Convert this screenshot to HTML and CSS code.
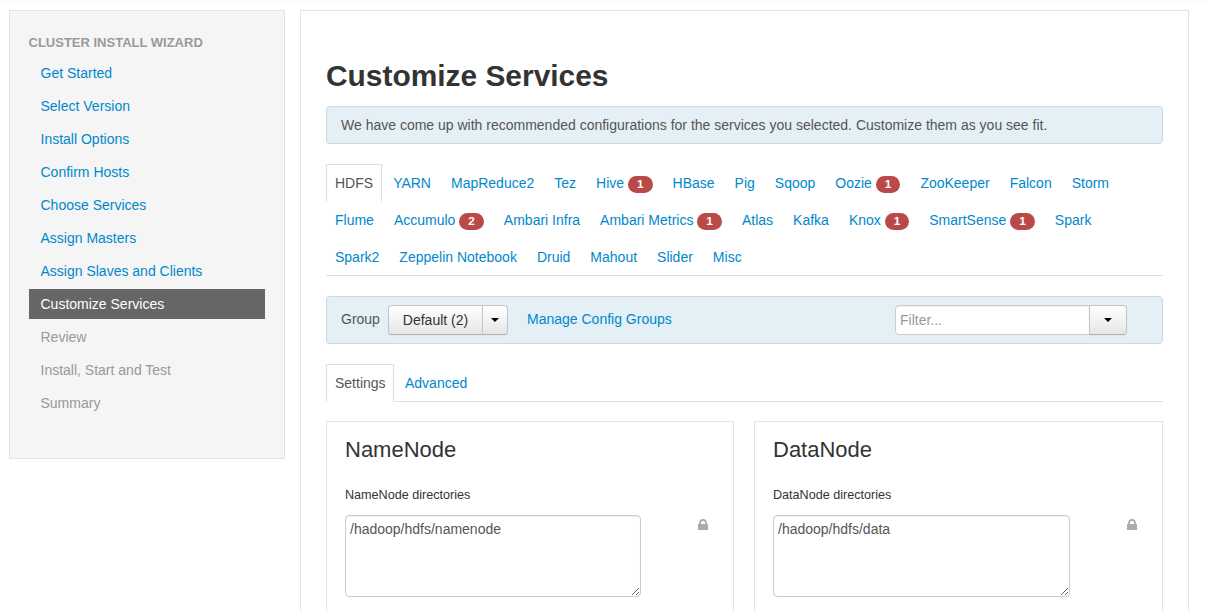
FILE: index.html
```html
<!DOCTYPE html>
<html lang="en">
<head>
<meta charset="utf-8">
<title>Cluster Install Wizard</title>
<link rel="stylesheet" href="styles.css">
</head>
<body>
<div class="page">
  <aside class="sidebar">
    <div class="nav-header">CLUSTER INSTALL WIZARD</div>
    <ul class="steps">
      <li><a>Get Started</a></li>
      <li><a>Select Version</a></li>
      <li><a>Install Options</a></li>
      <li><a>Confirm Hosts</a></li>
      <li><a>Choose Services</a></li>
      <li><a>Assign Masters</a></li>
      <li><a>Assign Slaves and Clients</a></li>
      <li class="active"><a>Customize Services</a></li>
      <li class="disabled"><a>Review</a></li>
      <li class="disabled"><a>Install, Start and Test</a></li>
      <li class="disabled"><a>Summary</a></li>
    </ul>
  </aside>
  <main class="content">
    <h2>Customize Services</h2>
    <div class="alert">We have come up with recommended configurations for the services you selected. Customize them as you see fit.</div>
    <ul class="tabs services">
      <li class="active"><a>HDFS</a></li>
      <li><a>YARN</a></li>
      <li><a>MapReduce2</a></li>
      <li><a>Tez</a></li>
      <li><a>Hive <span class="badge">1</span></a></li>
      <li><a>HBase</a></li>
      <li><a>Pig</a></li>
      <li><a>Sqoop</a></li>
      <li><a>Oozie <span class="badge">1</span></a></li>
      <li><a>ZooKeeper</a></li>
      <li><a>Falcon</a></li>
      <li><a>Storm</a></li>
      <li><a>Flume</a></li>
      <li><a>Accumulo <span class="badge">2</span></a></li>
      <li><a>Ambari Infra</a></li>
      <li><a>Ambari Metrics <span class="badge">1</span></a></li>
      <li><a>Atlas</a></li>
      <li><a>Kafka</a></li>
      <li><a>Knox <span class="badge">1</span></a></li>
      <li><a>SmartSense <span class="badge">1</span></a></li>
      <li><a>Spark</a></li>
      <li><a>Spark2</a></li>
      <li><a>Zeppelin Notebook</a></li>
      <li><a>Druid</a></li>
      <li><a>Mahout</a></li>
      <li><a>Slider</a></li>
      <li><a>Misc</a></li>
    </ul>
    <div class="group-bar">
      <span class="group-label">Group</span>
      <div class="btn-group">
        <button class="btn btn-main">Default (2)</button>
        <button class="btn btn-caret"><span class="caret"></span></button>
      </div>
      <a class="manage">Manage Config Groups</a>
      <div class="filter">
        <input type="text" placeholder="Filter...">
        <button class="btn"><span class="caret"></span></button>
      </div>
    </div>
    <ul class="tabs views">
      <li class="active"><a>Settings</a></li>
      <li><a>Advanced</a></li>
    </ul>
    <div class="cards">
      <section class="card">
        <h4>NameNode</h4>
        <label>NameNode directories</label>
        <div class="field">
          <textarea>/hadoop/hdfs/namenode</textarea>
          <svg class="lock" width="10" height="12" viewBox="0 0 10 12"><path fill="#aaa" fill-rule="evenodd" d="M1.2 5V3.8a3.8 3.8 0 0 1 7.6 0V5h.7q.5 0 .5.5v5q0 .5-.5.5h-9q-.5 0-.5-.5v-5Q0 5 .5 5zM3 5h4V3.8a2 2 0 0 0-4 0z"/></svg>
        </div>
      </section>
      <section class="card">
        <h4>DataNode</h4>
        <label>DataNode directories</label>
        <div class="field">
          <textarea>/hadoop/hdfs/data</textarea>
          <svg class="lock" width="10" height="12" viewBox="0 0 10 12"><path fill="#aaa" fill-rule="evenodd" d="M1.2 5V3.8a3.8 3.8 0 0 1 7.6 0V5h.7q.5 0 .5.5v5q0 .5-.5.5h-9q-.5 0-.5-.5v-5Q0 5 .5 5zM3 5h4V3.8a2 2 0 0 0-4 0z"/></svg>
        </div>
      </section>
    </div>
  </main>
</div>
</body>
</html>
```
FILE: styles.css
```css
* { box-sizing: border-box; }
html, body { height: 100%; }
body {
  margin: 0;
  background: linear-gradient(#fafafa, #fff 3px) #fff;
  color: #333;
  font: 14px/20px "Liberation Sans", Arial, sans-serif;
}
ul { list-style: none; margin: 0; padding: 0; }
a { color: #0088cc; text-decoration: none; }
h2, h4 { margin: 0; }

.page {
  display: flex;
  align-items: flex-start;
  gap: 15px;
  height: 100%;
  padding: 10px 19px 0 9px;
}

.sidebar {
  flex: none;
  width: 276px;
  height: 449px;
  padding: 22px 19px;
  background: #f5f5f5;
  border: 1px solid #e3e3e3;
}
.nav-header {
  color: #999;
  font-size: 13px;
  font-weight: bold;
  text-indent: -0.5px;
  text-shadow: 0 1px 0 rgba(255, 255, 255, .5);
  margin-bottom: 5px;
}
.steps { display: flex; flex-direction: column; gap: 3px; }
.steps a { display: block; padding: 5px 11.5px; height: 30px; }
.steps .active a { background: #666; color: #fff; }
.steps .disabled a { color: #999; }

.content {
  flex: 1;
  display: flex;
  flex-direction: column;
  height: 100%;
  padding: 45px 25px 0;
  border: 1px solid #e3e3e3;
  border-bottom: 0;
}
.content h2 { font-size: 29.9px; line-height: 40px; }
.alert {
  margin: 10px 0 20px;
  height: 38px;
  padding: 8px 14px;
  background: #e4f0f5;
  border: 1px solid #cfd9dd;
  border-radius: 4px;
  color: #555;
}

.tabs { display: flex; flex-wrap: wrap; border-bottom: 1px solid #ddd; }
.tabs li { height: 38px; margin-bottom: -1px; }
.tabs a {
  display: block;
  height: 38px;
  margin-right: 2px;
  padding: 8px;
  border: 1px solid transparent;
  white-space: nowrap;
}
.tabs .active a { color: #555; background: #fff; border-color: #ddd; border-bottom-color: #fff; }
.views .active a { width: 68px; }
.services { margin-bottom: 20px; }
.badge {
  display: inline-block;
  height: 17px;
  margin: 1px 0 -5px;
  padding: 1px 9px 2px;
  border-radius: 9px;
  background: #b94a48;
  color: #fff;
  font-size: 11.844px;
  font-weight: bold;
  line-height: 14px;
}

.group-bar {
  display: flex;
  align-items: flex-start;
  height: 48px;
  padding: 8px 35px 0 14px;
  margin-bottom: 20px;
  background: #e4f0f5;
  border: 1px solid #cfd9dd;
  border-radius: 4px;
}
.group-label { width: 47px; padding-top: 4px; color: #555; }
.btn-group { display: flex; width: 120px; }
.btn {
  height: 30px;
  margin: 0;
  padding: 0;
  font: inherit;
  color: #333;
  background: linear-gradient(#fff, #e6e6e6);
  border: 1px solid #c5c5c5;
  border-bottom-color: #b3b3b3;
  border-radius: 4px;
  box-shadow: inset 0 1px 0 rgba(255, 255, 255, .2), 0 1px 2px rgba(0, 0, 0, .05);
}
.btn-main { width: 95px; border-radius: 4px 0 0 4px; }
.btn-caret { width: 26px; margin-left: -1px; border-radius: 0 4px 4px 0; }
.caret {
  display: block;
  width: 0;
  margin: 0 auto;
  border: 4px solid transparent;
  border-top-color: #000;
  border-bottom: 0;
}
.manage { margin-left: 19px; padding-top: 4px; }
.filter { display: flex; margin-left: auto; }
.filter input {
  width: 195px;
  height: 30px;
  padding: 4px;
  font: inherit;
  background: #fff;
  border: 1px solid #ccc;
  border-radius: 4px 0 0 4px;
  box-shadow: inset 0 1px 1px rgba(0, 0, 0, .075);
}
.filter input::placeholder { color: #999; }
.filter .btn { width: 38px; margin-left: -1px; border-radius: 0 4px 4px 0; }

.cards {
  flex: 1;
  display: grid;
  grid-template-columns: 408px 409px;
  gap: 20px;
  margin-top: 19px;
}
.card { padding: 18px 18px 0; border: 1px solid #e3e3e3; border-bottom: 0; }
.card h4 { font-size: 22px; font-weight: normal; line-height: 20px; }
.card label { display: block; margin-top: 25px; font-size: 12.6px; }
.field { display: flex; margin-top: 10px; }
.field textarea {
  width: 296px;
  height: 82px;
  padding: 3px 4px;
  font: inherit;
  color: #555;
  background: #fff;
  border: 1px solid #ccc;
  border-radius: 4px;
  box-shadow: inset 0 1px 1px rgba(0, 0, 0, .075);
}
.card:last-child textarea { width: 297px; }
.lock { margin: 4px 0 0 56.5px; }
```
